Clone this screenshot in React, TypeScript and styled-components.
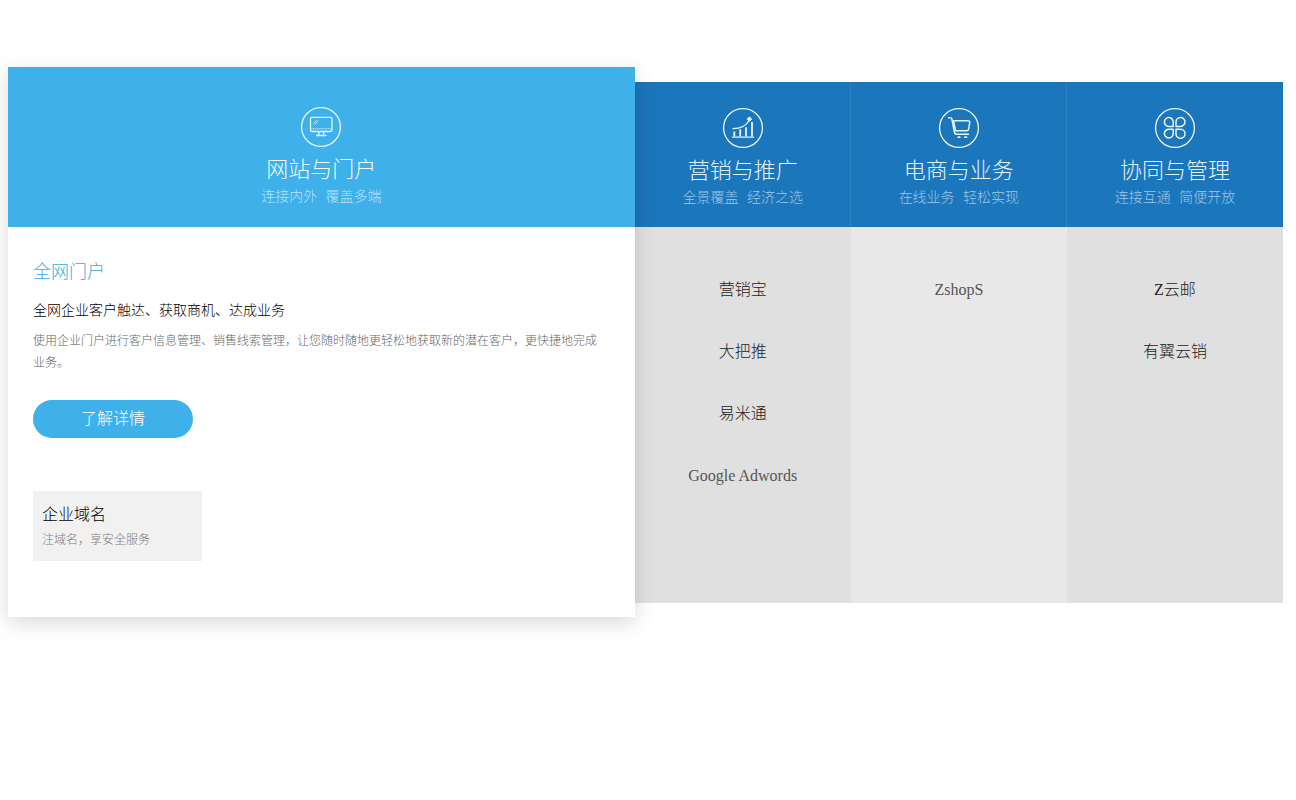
import React from "react";
import styled, { createGlobalStyle } from "styled-components";

const GlobalStyle = createGlobalStyle`
  * { box-sizing: border-box; }
  body {
    margin: 0;
    background: #fff;
    font-family: "Liberation Serif", "Noto Sans CJK SC", serif;
    font-weight: 300;
    color: #333;
  }
  h2, h3, h4, p, ul { margin: 0; padding: 0; font-weight: 300; }
`;

const Panels = styled.main`
  display: grid;
  grid-template-columns: 2.9fr 1fr 1fr 1fr;
  padding: 67px 13px 67px 8px;
`;

const ActivePanel = styled.section`
  position: relative;
  z-index: 1;
  background: #fff;
  box-shadow: 0 6px 20px rgba(0, 0, 0, 0.15);
`;

const Column = styled.section<{ $light?: boolean }>`
  margin: 15px 0 14px;
  background: ${(p) => (p.$light ? "#e8e8e8" : "#e0e0e0")};

  &:not(:last-child) > header {
    box-shadow: inset -1px 0 #3283c2;
  }
`;

const PanelHeader = styled.header<{ $active?: boolean }>`
  display: flex;
  flex-direction: column;
  align-items: center;
  padding: ${(p) => (p.$active ? "40px 0 19px" : "26px 0 18px")};
  background: ${(p) => (p.$active ? "#3eb0ea" : "#1c76bb")};
  color: ${(p) => (p.$active ? "#f2faff" : "#e2f3ff")};
`;

const PanelIcon = styled.svg`
  width: 40px;
  height: 40px;
  fill: none;
  stroke: #e8f6ff;
  stroke-width: 1.3;
  stroke-linecap: round;
  stroke-linejoin: round;
`;

const PanelTitle = styled.h2`
  margin-top: 8px;
  font-size: 22px;
  line-height: 30px;
`;

const PanelTagline = styled.p<{ $active?: boolean }>`
  margin-top: 1px;
  font-family: "Liberation Mono", "Noto Sans CJK SC", monospace;
  font-size: 14px;
  line-height: 22px;
  color: ${(p) => (p.$active ? "#b4e2fa" : "#9cc8ea")};
`;

const ActiveBody = styled.div`
  padding: 31px 30px 56px 25px;
`;

const ProductName = styled.h3`
  font-size: 18px;
  line-height: 28px;
  color: #3eabe0;
`;

const ProductLead = styled.p`
  margin-top: 14px;
  font-size: 14px;
  line-height: 22px;
  color: #000;
`;

const ProductText = styled.p`
  margin-top: 8px;
  font-size: 12px;
  line-height: 22px;
  color: #666;
`;

const DetailButton = styled.button`
  display: block;
  width: 160px;
  height: 38px;
  margin-top: 26px;
  padding: 0 0 4px;
  border: 0;
  border-radius: 19px;
  background: #3eb0ea;
  color: #fff;
  font: inherit;
  font-size: 16px;
  cursor: pointer;
`;

const RelatedCard = styled.a`
  display: block;
  width: 169px;
  margin-top: 53px;
  padding: 12px 9px 10px;
  background: #f1f1f1;
  text-decoration: none;
`;

const RelatedTitle = styled.h4`
  font-size: 16px;
  line-height: 24px;
  color: #000;
`;

const RelatedText = styled.p`
  margin-top: 2px;
  font-size: 12px;
  line-height: 22px;
  color: #7c7c7c;
`;

const ProductList = styled.ul`
  padding-top: 32px;
  list-style: none;
  text-align: center;
`;

const ProductLink = styled.a<{ $latin?: boolean }>`
  font-size: 16px;
  line-height: 62px;
  color: ${(p) => (p.$latin ? "#555" : "#222")};
  text-decoration: none;
`;

const ProductItem = styled.li`
  height: 62px;
`;

const MonitorIcon = () => (
  <PanelIcon viewBox="0 0 40 40" aria-hidden="true">
    <circle cx="20" cy="20" r="19.4" />
    <rect x="9.5" y="10.3" width="21.5" height="14.2" rx="1.5" />
    <path d="M10 21.8H30.5" strokeWidth="0.8" opacity="0.7" />
    <path d="M17.8 25V28M22.6 25V28M15.5 28.5H25" />
    <path d="M12.8 16.5L15 13.5M14.5 17L17 13.7" strokeWidth="0.7" />
  </PanelIcon>
);

const ChartIcon = () => (
  <PanelIcon viewBox="0 0 40 40" aria-hidden="true">
    <circle cx="20" cy="20" r="19.4" />
    <path d="M9.5 29.2H30.5" />
    <path d="M11.3 23.5V28.5M17.2 21.3V28.5M23 19.2V28.5M29 14V28.5" strokeWidth="1.8" strokeLinecap="butt" />
    <path d="M10 20.7C17 20.7 23 18 26 12.5" />
    <path d="M26.8 9L28.8 11.3L26.5 13.2L24.2 11.2Z" fill="#e8f6ff" strokeWidth="0.8" />
  </PanelIcon>
);

const CartIcon = () => (
  <PanelIcon viewBox="0 0 40 40" aria-hidden="true">
    <circle cx="20" cy="20" r="19.4" />
    <path d="M9.5 9.7H11.3Q12.6 9.7 12.9 11L15.4 24Q15.9 26.3 17.9 26.3H29.5" strokeWidth="1.5" />
    <path d="M14.5 12.7H29Q31 12.7 30.7 14.5L29.8 20.5Q29.5 22.7 27.5 22.7H16.5Z" strokeWidth="1.5" />
    <path d="M19.3 29.2H20.7M26 29.2H27.4" strokeWidth="1.8" />
  </PanelIcon>
);

const CloverIcon = () => (
  <PanelIcon viewBox="0 0 40 40" aria-hidden="true">
    <circle cx="20" cy="20" r="19.4" />
    <g strokeWidth="1.5">
      <path d="M18.2 18.4H14A4.4 4.4 0 1 1 18.2 14Z" />
      <path d="M21 18.4V14A4.5 4.5 0 1 1 25.5 18.4Z" />
      <path d="M18.2 21.2V25.7A4.4 4.4 0 1 1 14 21.2Z" />
      <path d="M21 21.2H25.5A4.5 4.5 0 1 1 21 25.7Z" />
    </g>
  </PanelIcon>
);

const columns = [
  {
    title: "营销与推广",
    tagline: "全景覆盖 经济之选",
    icon: <ChartIcon />,
    products: [
      { name: "营销宝" },
      { name: "大把推" },
      { name: "易米通" },
      { name: "Google Adwords", latin: true },
    ],
  },
  {
    title: "电商与业务",
    tagline: "在线业务 轻松实现",
    icon: <CartIcon />,
    products: [{ name: "ZshopS", latin: true }],
    light: true,
  },
  {
    title: "协同与管理",
    tagline: "连接互通 简便开放",
    icon: <CloverIcon />,
    products: [{ name: "Z云邮" }, { name: "有翼云销" }],
  },
];

export default function App() {
  return (
    <>
      <GlobalStyle />
      <Panels lang="zh-CN">
        <ActivePanel>
          <PanelHeader $active>
            <MonitorIcon />
            <PanelTitle>网站与门户</PanelTitle>
            <PanelTagline $active>连接内外 覆盖多端</PanelTagline>
          </PanelHeader>
          <ActiveBody>
            <ProductName>全网门户</ProductName>
            <ProductLead>全网企业客户触达、获取商机、达成业务</ProductLead>
            <ProductText>
              使用企业门户进行客户信息管理、销售线索管理，让您随时随地更轻松地获取新的潜在客户，更快捷地完成业务。
            </ProductText>
            <DetailButton type="button">了解详情</DetailButton>
            <RelatedCard href="#domain">
              <RelatedTitle>企业域名</RelatedTitle>
              <RelatedText>注域名，享安全服务</RelatedText>
            </RelatedCard>
          </ActiveBody>
        </ActivePanel>
        {columns.map((column) => (
          <Column key={column.title} $light={column.light}>
            <PanelHeader>
              {column.icon}
              <PanelTitle>{column.title}</PanelTitle>
              <PanelTagline>{column.tagline}</PanelTagline>
            </PanelHeader>
            <ProductList>
              {column.products.map((product) => (
                <ProductItem key={product.name}>
                  <ProductLink href="#product" $latin={product.latin}>
                    {product.name}
                  </ProductLink>
                </ProductItem>
              ))}
            </ProductList>
          </Column>
        ))}
      </Panels>
    </>
  );
}
